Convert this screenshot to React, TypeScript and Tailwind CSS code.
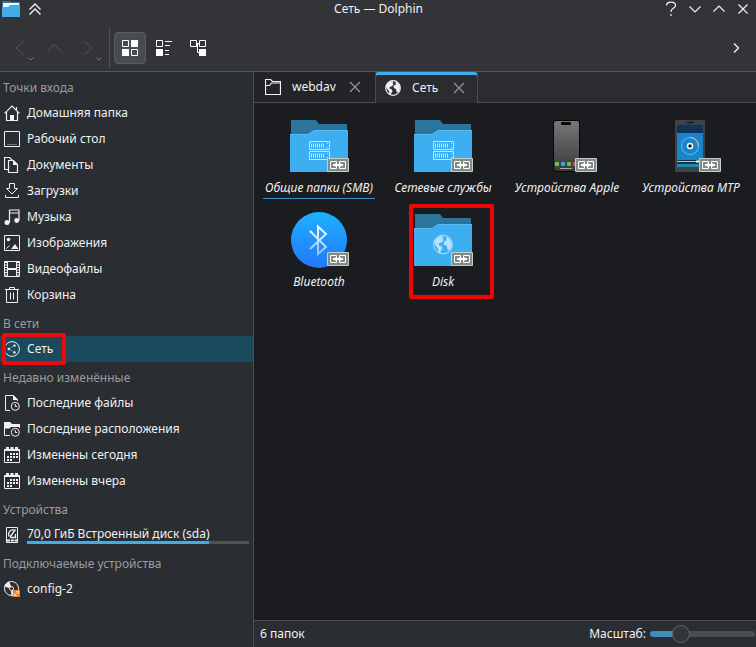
import type { ReactNode } from "react";

type IconProps = { children: ReactNode; className?: string };

function Glyph({ children, className = "h-4 w-4" }: IconProps) {
  return (
    <svg
      viewBox="0 0 16 16"
      className={`shrink-0 ${className}`}
      fill="none"
      stroke="currentColor"
      aria-hidden="true"
    >
      {children}
    </svg>
  );
}

const HomeIcon = () => (
  <Glyph>
    <path d="M.6 8.4 8 1l7.4 7.4M2.5 7v8.5h11V7M12.5 5V2" strokeWidth="1.2" />
    <path d="M6 10h4v5.5H6z" fill="currentColor" stroke="none" />
  </Glyph>
);

const DesktopIcon = () => (
  <Glyph>
    <path d="M.5.5h15v15H.5z" />
    <path d="M3 13.5h10" strokeOpacity=".35" />
  </Glyph>
);

const DocumentsIcon = () => (
  <Glyph>
    <path d="M4.5 12.5h-4V.5h5l3 3M4.5 3.5h5l4 4v8h-9z" strokeWidth="1.2" />
    <path d="M9 3v5h5z" fill="currentColor" stroke="none" />
  </Glyph>
);

const DownloadIcon = () => (
  <Glyph>
    <path d="M5.5.5h5v5h3L8 11 2.500 5.500h3zM1.500 12v2.500h13V12" />
  </Glyph>
);

const MusicIcon = () => (
  <Glyph>
    <path d="M5.5 13.5V1h9.5v10.5M5.5 4H15" strokeWidth="1.2" />
    <circle cx="3" cy="13.5" r="2.5" fill="currentColor" stroke="none" />
    <circle cx="12.7" cy="11.5" r="2.4" fill="currentColor" stroke="none" />
  </Glyph>
);

const ImageIcon = () => (
  <Glyph>
    <path d="M.5.5h15v15H.5z" />
    <circle cx="4.5" cy="4.5" r="1.8" fill="currentColor" stroke="none" />
    <path d="m7 14 4-5 3.5 5z" fill="currentColor" stroke="none" />
    <path d="m2.5 13.5 3-3" />
  </Glyph>
);

const VideoIcon = () => (
  <Glyph>
    <path d="M.5.5h15v15H.5zM3.5.5v15M12.5.5v15" />
    <path d="M3.5 8h9" strokeWidth="2" />
    <path d="M2 1v14M14 1v14" strokeWidth="2" strokeDasharray="1 1.500" />
  </Glyph>
);

const TrashIcon = () => (
  <Glyph>
    <path d="M1 2.5h14M5.5 2.5v-2h5v2M2.5 2.5v13h11v-13M6.5 5.5v7M9.5 5.5v7" />
  </Glyph>
);

const NetworkIcon = () => (
  <Glyph>
    <circle cx="8" cy="8" r="7.4" />
    <path d="m5 8 5-3M5 8l5 3" strokeWidth=".6" strokeOpacity=".6" />
    <g fill="currentColor" stroke="none">
      <circle cx="4.8" cy="8" r="1.2" />
      <circle cx="10.5" cy="4.6" r="1.2" />
      <circle cx="10.5" cy="11.4" r="1.2" />
    </g>
  </Glyph>
);

const Clock = () => (
  <>
    <circle cx="11.3" cy="11.3" r="4" />
    <path d="M11.3 9v2.5h2" />
  </>
);

const RecentFileIcon = () => (
  <Glyph>
    <path d="M6 15.5H1.5V.5h8l4 4V6" />
    <path d="M9 0v5h5z" fill="currentColor" stroke="none" />
    <Clock />
  </Glyph>
);

const RecentPlaceIcon = () => (
  <Glyph>
    <path d="M6 14.5H.5v-12M15.5 3v4" />
    <path d="M0 1h6l2 2h8v3H7L5.5 7.5H0z" fill="currentColor" stroke="none" />
    <Clock />
  </Glyph>
);

const CalendarIcon = () => (
  <Glyph>
    <path d="M.5 2.5h15v13H.5z" />
    <path d="M0 3h16" strokeWidth="2" />
    <path d="M2 1h3M6.500 1h3M11 1h3" strokeWidth="2" />
    <path d="M6 7h2M9 7h2M12 7h2M3 10h2M6 10h2M9 10h2M12 10h2M3 13h2M6 13h2" strokeWidth="2" />
  </Glyph>
);

const DriveIcon = () => (
  <Glyph>
    <path d="M2.5.5h11v15h-11z" />
    <path d="M5 9.500c-1.500-4 1-7 5-6.500M11.500 2.500 6 10M6 10.500h5.500V7" strokeWidth="1.300" />
    <path d="M3 13.500h10" strokeWidth="2" strokeDasharray="3 .8" />
  </Glyph>
);

const OpticalIcon = () => (
  <Glyph>
    <circle cx="7.500" cy="7.500" r="7" />
    <path d="M7.500 7.500.8 5a7 7 0 0 1 4-4zM7.500 7.500 13 12l-5 3z" fill="currentColor" />
    <circle cx="7.500" cy="7.500" r="2" fill="#2a2d31" />
    <path d="M9 9h7v7H9z" fill="#f67c1f" stroke="none" />
    <path d="m10.500 14.500 4-4M12 10.500h2.500V13M10.500 12v2.500H13" stroke="#fff" strokeWidth=".6" />
  </Glyph>
);

const FolderIcon = () => (
  <Glyph>
    <path d="M.5 15.5v-15h5l2 2h8v13zM.5 6.500h4l2-2.500h9" strokeWidth="1.200" />
  </Glyph>
);

const land =
  "M2.2 3.5 6 1.2l2.5.6-1 1.7 1.2.8-1.7 2-2 .5-.8 1.7 2 .5 1.5 1.7-1.2 2-.8 2.2-1.2-.7-.5-3L2 8.700 1 6zM10 3l2-1 2.500 3.500L15 9l-1.500 3.500-2-.5-.5-3-2-.7-.5-2 1.500-1.500 1.500-.3z";

const GlobeIcon = () => (
  <Glyph>
    <circle cx="8" cy="8" r="7.300" strokeWidth="1.200" />
    <path d={land} fill="currentColor" stroke="none" />
  </Glyph>
);

const GridViewIcon = () => (
  <Glyph>
    <path d="M.5.5h6v6h-6zM9.500 9.500h6v6h-6z" />
    <path d="M9 0h7v7H9zM0 9h7v7H0z" fill="currentColor" stroke="none" />
  </Glyph>
);

const CompactViewIcon = () => (
  <Glyph>
    <path d="M.5.5h6v6h-6zM9 1.500h7M9 5.500h5M9 10.500h4M9 14.500h4" />
    <path d="M0 9h7v7H0z" fill="currentColor" stroke="none" />
  </Glyph>
);

const TreeViewIcon = () => (
  <Glyph>
    <path d="M.5.5h6v6h-6zM9.500.5h6v6h-6zM6.500 3.500h3M7.500 3.500v9H10" />
    <path d="M9 9h7v7H9z" fill="currentColor" stroke="none" />
  </Glyph>
);

const CloseIcon = () => (
  <Glyph>
    <path d="m3 3 10 10M13 3 3 13" strokeWidth="1.200" />
  </Glyph>
);

/* ---- 64px icons of the file view ---- */

const LinkBadge = () => (
  <g>
    <rect x="40" y="44" width="22" height="14" rx="1" fill="#c5cecb" />
    <rect x="41" y="45" width="20" height="12" fill="#7f8b86" />
    <path d="M49.500 50v-2.500h-6v7h6V52M52.500 50v-2.500h6v7h-6V52" fill="none" stroke="#fff" />
    <path d="M46 51h10" stroke="#fff" strokeWidth="2" />
    <path d="m48 49 2.500 2-2.500 2zM54 49l-2.500 2 2.500 2z" fill="#fff" />
  </g>
);

const Folder = ({ children }: { children: ReactNode }) => (
  <svg viewBox="0 0 64 64" className="h-16 w-16" aria-hidden="true">
    <path d="M4 6h25l3 4h28v16H4z" fill="#2b759d" />
    <path d="M3 20h18l6-4h34v42H3z" fill="#3daef0" />
    <path d="M3 20.500h18.200l6-4H61" fill="none" stroke="#63c0f5" strokeOpacity=".7" />
    {children}
    <LinkBadge />
  </svg>
);

const ServerFolder = () => (
  <Folder>
    <g fill="none" stroke="#c0e4fa">
      <path d="M22.500 27.500h20v8h-20zM22.500 37.500h20v8h-20z" />
      <path d="M24 31.500h14M24 41.500h14" strokeWidth="4" strokeDasharray="1 1" />
      <path d="M40 29.500h1M40 33.500h1M40 39.500h1M40 43.500h1" />
    </g>
  </Folder>
);

const GlobeFolder = () => (
  <Folder>
    <g transform="translate(22 26.500) scale(1.250)">
      <circle cx="8" cy="8" r="7.500" fill="none" stroke="#b8e2fb" strokeWidth=".8" />
      <path d={land} fill="#b8e2fb" />
    </g>
  </Folder>
);

const PhoneApple = () => (
  <svg viewBox="0 0 64 64" className="h-16 w-16" aria-hidden="true">
    <defs>
      <linearGradient id="phone" x1="0" y1="0" x2="0" y2="1">
        <stop stopColor="#777" />
        <stop offset="1" stopColor="#3a3a3a" />
      </linearGradient>
    </defs>
    <rect x="18" y="6" width="27" height="52" rx="3" fill="#060606" />
    <rect x="19" y="7" width="25" height="50" rx="2" fill="url(#phone)" />
    <rect x="26" y="8" width="10" height="3" rx="1" fill="#0a0a0a" />
    <rect x="20" y="48" width="4" height="4" rx="1" fill="#6fc348" />
    <rect x="26" y="48" width="4" height="4" rx="1" fill="#2fa9ee" />
    <rect x="32" y="48" width="4" height="4" rx="1" fill="#5fc646" />
    <rect x="38" y="48" width="4" height="4" rx="1" fill="#e8455b" />
    <path d="M25 54.500h12" stroke="#aaa" />
    <LinkBadge />
  </svg>
);

const PhoneMtp = () => (
  <svg viewBox="0 0 64 64" className="h-16 w-16" aria-hidden="true">
    <defs>
      <linearGradient id="mtp" x1="0" y1="0" x2="0" y2="1">
        <stop stopColor="#1e7fd0" />
        <stop offset="1" stopColor="#1588c4" />
      </linearGradient>
    </defs>
    <rect x="16" y="6" width="30" height="52" rx="1" fill="#3d4246" />
    <path d="M28 8.500h7" stroke="#17191c" strokeWidth="1.500" />
    <path d="M18 11h26v8H18z" fill="#0f3358" />
    <path d="M18 19h26v27H18z" fill="url(#mtp)" />
    <path d="M18 46h26v6H18z" fill="#15344a" />
    <circle cx="31" cy="32" r="8.500" fill="none" stroke="#6fb7ea" />
    <path d="M31 23.500a8.500 8.500 0 0 1 8.500 8.500" fill="none" stroke="#d7c56a" />
    <circle cx="31" cy="32" r="2.500" fill="#10202e" stroke="#fff" strokeWidth="1.500" />
    <path d="M18 47.500h20" stroke="#e5c84d" />
    <path d="M37 47.500h7" stroke="#fff" strokeWidth="2" />
    <path d="M18 51.500h26" stroke="#1d8aa8" strokeWidth="3" />
    <LinkBadge />
  </svg>
);

const BluetoothIcon = () => (
  <svg viewBox="0 0 64 64" className="h-16 w-16" aria-hidden="true">
    <defs>
      <linearGradient id="bt" x1="0" y1="0" x2="0" y2="1">
        <stop stopColor="#1bb2fd" />
        <stop offset="1" stopColor="#2277fb" />
      </linearGradient>
      <linearGradient id="rune" x1="0" y1="0" x2="0" y2="1">
        <stop stopColor="#fff" />
        <stop offset="1" stopColor="#8cc2fc" />
      </linearGradient>
    </defs>
    <circle cx="32" cy="32" r="28" fill="url(#bt)" />
    <path
      d="m23 23 16 16-8 7V18.500l8 7.500-16 15"
      fill="none"
      stroke="url(#rune)"
      strokeWidth="2"
    />
    <LinkBadge />
  </svg>
);

type Place = { icon: () => ReactNode; label: string; active?: boolean; used?: number };

const places: { title: string; items: Place[] }[] = [
  {
    title: "Точки входа",
    items: [
      { icon: HomeIcon, label: "Домашняя папка" },
      { icon: DesktopIcon, label: "Рабочий стол" },
      { icon: DocumentsIcon, label: "Документы" },
      { icon: DownloadIcon, label: "Загрузки" },
      { icon: MusicIcon, label: "Музыка" },
      { icon: ImageIcon, label: "Изображения" },
      { icon: VideoIcon, label: "Видеофайлы" },
      { icon: TrashIcon, label: "Корзина" },
    ],
  },
  { title: "В сети", items: [{ icon: NetworkIcon, label: "Сеть", active: true }] },
  {
    title: "Недавно изменённые",
    items: [
      { icon: RecentFileIcon, label: "Последние файлы" },
      { icon: RecentPlaceIcon, label: "Последние расположения" },
      { icon: CalendarIcon, label: "Изменены сегодня" },
      { icon: CalendarIcon, label: "Изменены вчера" },
    ],
  },
  {
    title: "Устройства",
    items: [{ icon: DriveIcon, label: "70,0 ГиБ Встроенный диск (sda)", used: 82 }],
  },
  { title: "Подключаемые устройства", items: [{ icon: OpticalIcon, label: "config-2" }] },
];

const entries = [
  { icon: ServerFolder, label: "Общие папки (SMB)", current: true },
  { icon: ServerFolder, label: "Сетевые службы" },
  { icon: PhoneApple, label: "Устройства Apple" },
  { icon: PhoneMtp, label: "Устройства MTP" },
  { icon: BluetoothIcon, label: "Bluetooth" },
  { icon: GlobeFolder, label: "Disk", marked: true },
];

const windowButtons = [
  { label: "Справка", d: "M3.500 4.500C3.500 0 12.500 0 12.500 4.500 12.500 7.500 8 7 8 10.500v.5M8 13v2" },
  { label: "Свернуть", d: "m2.500 5.500 5.500 5.500 5.500-5.500" },
  { label: "Развернуть", d: "m2.500 10.500 5.500-5.500 5.500 5.500" },
  { label: "Закрыть", d: "m3.500 3.500 9 9M12.500 3.500l-9 9" },
];

const navButtons = [
  { label: "Назад", d: "M11.500 1 4.500 8l7 7", menu: true },
  { label: "Вверх", d: "m1 11.500 7-7 7 7", menu: false },
  { label: "Вперёд", d: "m4.500 1 7 7-7 7", menu: true },
];

const viewButtons = [
  { label: "Значки", icon: GridViewIcon, active: true },
  { label: "Компактный вид", icon: CompactViewIcon, active: false },
  { label: "Таблица", icon: TreeViewIcon, active: false },
];

function TitleBar() {
  return (
    <div className="flex h-5 items-center pr-px pb-0.5">
      <div className="flex flex-1 items-center gap-[7px] pl-0.5">
        <svg viewBox="0 0 18 16" className="h-4 w-[18px]" aria-hidden="true">
          <path d="M0 0h8l1 1h9v15H0z" fill="#2878a8" />
          <path d="M1 2h16v5H1z" fill="#f4fafd" />
          <path d="M0 6h6l2-2h10v12H0z" fill="#42acea" />
        </svg>
        <button aria-label="Держать поверх" className="flex">
          <Glyph>
            <path d="M2.500 8.500 8 3l5.500 5.500M2.500 13.500 8 8l5.500 5.500" strokeWidth="1.400" />
          </Glyph>
        </button>
      </div>
      <h1>Сеть — Dolphin</h1>
      <div className="flex flex-1 justify-end">
        {windowButtons.map(({ label, d }) => (
          <button key={label} aria-label={label} className="flex w-6 justify-center">
            <Glyph>
              <path d={d} strokeWidth="1.200" />
            </Glyph>
          </button>
        ))}
      </div>
    </div>
  );
}

function Toolbar() {
  return (
    <div className="flex items-center gap-0.5 px-1 pt-3 pb-[7px]">
      {navButtons.map(({ label, d, menu }) => (
        <button
          key={label}
          aria-label={label}
          disabled
          className="relative flex h-8 w-8 items-center justify-center text-[#55585c]"
        >
          <Glyph>
            <path d={d} />
          </Glyph>
          {menu && (
            <svg viewBox="0 0 6 4" className="absolute right-0.5 bottom-[3px] h-1 w-1.5">
              <path d="M.5.5 3 3 5.500.5" fill="none" stroke="#77797c" />
            </svg>
          )}
        </button>
      ))}
      <div className="flex w-1.5 justify-center">
        <div className="-my-1 h-10 w-px bg-[#505256]" />
      </div>
      {viewButtons.map(({ label, icon: Icon, active }) => (
        <button
          key={label}
          aria-label={label}
          aria-pressed={active}
          className={`flex h-8 w-8 items-center justify-center rounded-sm text-white ${
            active ? "border border-[#5a5e62] bg-[#484c50]" : ""
          }`}
        >
          <Icon />
        </button>
      ))}
      <button aria-label="Ещё" className="ml-auto flex h-8 w-8 items-center justify-center">
        <Glyph>
          <path d="M6 3.500 10.500 8 6 12.500" strokeWidth="1.400" />
        </Glyph>
      </button>
    </div>
  );
}

function Sidebar() {
  return (
    <nav className="w-[254px] shrink-0 border-r border-[#4b4d51] bg-[#2a2d31]">
      {places.map(({ title, items }) => (
        <section key={title}>
          <h2 className="pt-1 pl-[3px] leading-6 text-[#9a9c9f]">{title}</h2>
          <ul>
            {items.map(({ icon: Icon, label, active, used }) => (
              <li key={label} className="relative">
                <a
                  href="#"
                  className={`flex h-[26px] items-center gap-[7px] px-1 whitespace-nowrap ${
                    active ? "bg-[#1a4a5c]" : ""
                  }`}
                >
                  <Icon />
                  {used === undefined ? (
                    <span>{label}</span>
                  ) : (
                    <span className="flex-1 pb-0.5">
                      <span className="block leading-[19px]">{label}</span>
                      <span className="-mt-0.5 block h-[3px] bg-[#505356]">
                        <span className="block h-full bg-[#3daee9]" style={{ width: `${used}%` }} />
                      </span>
                    </span>
                  )}
                </a>
                {active && (
                  <span className="pointer-events-none absolute -inset-y-[3px] left-0.5 w-16 rounded-xs border-4 border-[#ee0a0c]" />
                )}
              </li>
            ))}
          </ul>
        </section>
      ))}
    </nav>
  );
}

function Tabs() {
  return (
    <div role="tablist" className="flex h-[31px]">
      <div className="flex w-[121px] items-center border-b border-[#4b4d51] bg-[#222428] pr-3 pl-[11px]">
        <button role="tab" aria-selected="false" className="flex flex-1 items-center gap-[11px]">
          <FolderIcon />
          webdav
        </button>
        <button aria-label="Закрыть webdav" className="text-[#94969a]">
          <CloseIcon />
        </button>
      </div>
      <div className="flex w-[103px] items-center rounded-t-sm border-x border-t-3 border-x-[#4b4d51] border-t-[#3daee9] bg-[#2a2c30] pr-2.5 pb-0.5 pl-[9px]">
        <button role="tab" aria-selected="true" className="flex flex-1 items-center gap-[11px]">
          <GlobeIcon />
          Сеть
        </button>
        <button aria-label="Закрыть Сеть" className="text-[#94969a]">
          <CloseIcon />
        </button>
      </div>
      <div className="flex-1 border-b border-[#4b4d51] bg-[#2a2c30]" />
    </div>
  );
}

function FileView() {
  return (
    <ul className="grid flex-1 grid-cols-[repeat(auto-fill,124px)] content-start gap-y-[9px] bg-[#1a1c20] pt-[11px] pl-[3px]">
      {entries.map(({ icon: Icon, label, current, marked }) => (
        <li key={label} className="relative">
          <button className="flex w-full flex-col items-center">
            <Icon />
            <span
              className={`border-b px-0.5 leading-5 whitespace-nowrap italic ${
                current ? "border-[#3d8fc6]" : "border-transparent"
              }`}
            >
              {label}
            </span>
          </button>
          {marked && (
            <span className="pointer-events-none absolute -top-1 -bottom-1.5 left-7 w-[85px] rounded-xs border-4 border-[#f00506]" />
          )}
        </li>
      ))}
    </ul>
  );
}

function StatusBar() {
  return (
    <footer className="flex h-[27px] items-center border-t border-[#4b4d51] bg-[#2a2d31] pr-px pl-1.5">
      <span>6 папок</span>
      <label htmlFor="zoom" className="mr-1 ml-auto">
        Масштаб:
      </label>
      <input
        id="zoom"
        type="range"
        min={0}
        max={100}
        defaultValue={25}
        className="h-[18px] w-[105px] appearance-none bg-transparent [&::-webkit-slider-runnable-track]:h-1.5 [&::-webkit-slider-runnable-track]:rounded-full [&::-webkit-slider-runnable-track]:bg-[linear-gradient(to_right,#3f8dba_30%,#4a4d51_30%)] [&::-webkit-slider-thumb]:-mt-1.5 [&::-webkit-slider-thumb]:h-[18px] [&::-webkit-slider-thumb]:w-[18px] [&::-webkit-slider-thumb]:appearance-none [&::-webkit-slider-thumb]:rounded-full [&::-webkit-slider-thumb]:border [&::-webkit-slider-thumb]:border-[#65686c] [&::-webkit-slider-thumb]:bg-[#33363a]"
      />
    </footer>
  );
}

export default function App() {
  return (
    <div className="flex min-h-screen flex-col bg-[#323438] font-['Noto_Sans',sans-serif] text-xs text-[#f0f1f2]">
      <header className="border-b border-[#54565a]">
        <TitleBar />
        <Toolbar />
      </header>
      <div className="flex flex-1">
        <Sidebar />
        <main className="flex min-w-0 flex-1 flex-col">
          <Tabs />
          <FileView />
          <StatusBar />
        </main>
      </div>
    </div>
  );
}
